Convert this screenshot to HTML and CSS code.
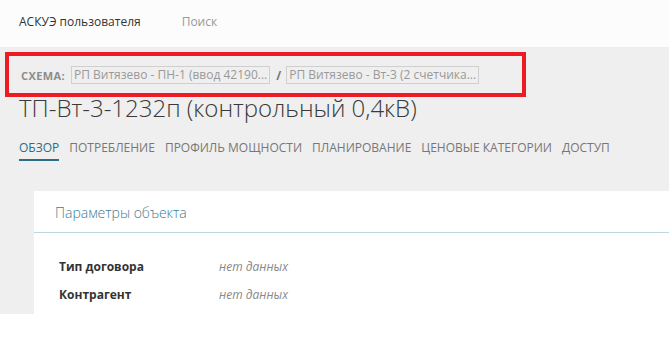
FILE: index.html
```html
<!DOCTYPE html>
<html lang="ru">
<head>
    <meta charset="UTF-8">
    <meta name="viewport" content="width=device-width, initial-scale=1.0">
    <title>ТП-Вт-3-1232п</title>
    <link rel="stylesheet" href="styles.css">
</head>
<body>
    <header class="topbar">
        <a href="#" class="brand">АСКУЭ пользователя</a>
        <a href="#" class="nav-link">Поиск</a>
    </header>

    <main class="page">
        <div class="schema">
            <span class="schema-label">Схема:</span>
            <a href="#" class="schema-item">РП Витязево - ПН-1 (ввод 42190...</a>
            <span class="schema-sep">/</span>
            <a href="#" class="schema-item">РП Витязево - Вт-3 (2 счетчика...</a>
        </div>
        <div class="highlight"></div>

        <h1 class="title">ТП-Вт-3-1232п (контрольный 0,4кВ)</h1>

        <nav class="tabs">
            <a href="#" class="tab active">Обзор</a>
            <a href="#" class="tab">Потребление</a>
            <a href="#" class="tab">Профиль мощности</a>
            <a href="#" class="tab">Планирование</a>
            <a href="#" class="tab">Ценовые категории</a>
            <a href="#" class="tab">Доступ</a>
        </nav>

        <section class="card">
            <h2 class="card-title">Параметры объекта</h2>
            <div class="card-body">
                <div class="row">
                    <span class="row-label">Тип договора</span>
                    <span class="row-value">нет данных</span>
                </div>
                <div class="row">
                    <span class="row-label">Контрагент</span>
                    <span class="row-value">нет данных</span>
                </div>
            </div>
        </section>
    </main>
</body>
</html>
```

FILE: styles.css
```css
html {
    background-color: #fff;
}
body {
    font-family: "Open Sans", "Noto Sans", sans-serif;
    margin: 0;
    color: #333;
    font-size: 12px;
    overflow: hidden;
}
a {
    text-decoration: none;
}
.topbar {
    display: flex;
    gap: 41px;
    padding: 12px 19px 15px;
    line-height: 20px;
    background-color: #fcfcfc;
}
.brand {
    color: #333;
}
.nav-link {
    color: #999;
}
.page {
    position: relative;
    background-color: #efefef;
    padding: 19px 0 0 19px;
}
.schema {
    display: flex;
    align-items: center;
    height: 18px;
    margin-bottom: 9px;
    padding-left: 2px;
}
.schema-label {
    font-size: 11px;
    font-weight: bold;
    text-transform: uppercase;
    letter-spacing: 0.4px;
    color: #8c8c8c;
    margin-right: 6px;
}
.schema-item {
    border: 1px solid #cfcfcf;
    padding: 0 2px;
    line-height: 16px;
    color: #999;
    white-space: nowrap;
}
.schema-sep {
    font-weight: bold;
    color: #777;
    margin: 0 5px 0 6px;
}
.highlight {
    position: absolute;
    left: 5px;
    top: 5px;
    width: 513px;
    height: 37px;
    border: 4px solid #ed1c24;
}
.title {
    margin: 0;
    font-size: 24px;
    font-weight: 300;
    line-height: 30px;
    color: #3a3a3a;
}
.tabs {
    display: flex;
    gap: 10px;
    margin-top: 17px;
}
.tab {
    text-transform: uppercase;
    color: #777;
    line-height: 16px;
    padding-bottom: 3px;
    border-bottom: 2px solid transparent;
}
.tab.active {
    color: #2b6c87;
    border-bottom-color: #2b6c87;
}
.card {
    margin: 30px 0 0 15px;
    background-color: #fff;
}
.card-title {
    margin: 0;
    padding: 12px 21px 9px;
    font-size: 14px;
    font-weight: 300;
    line-height: 20px;
    color: #3f7a91;
    border-bottom: 1px solid #bcd7e2;
}
.card-body {
    padding: 20px 25px 5px;
}
.row {
    display: flex;
    padding: 4px 0;
    line-height: 20px;
}
.row-label {
    width: 160px;
    font-weight: bold;
    color: #333;
}
.row-value {
    font-style: italic;
    color: #888;
}
```
